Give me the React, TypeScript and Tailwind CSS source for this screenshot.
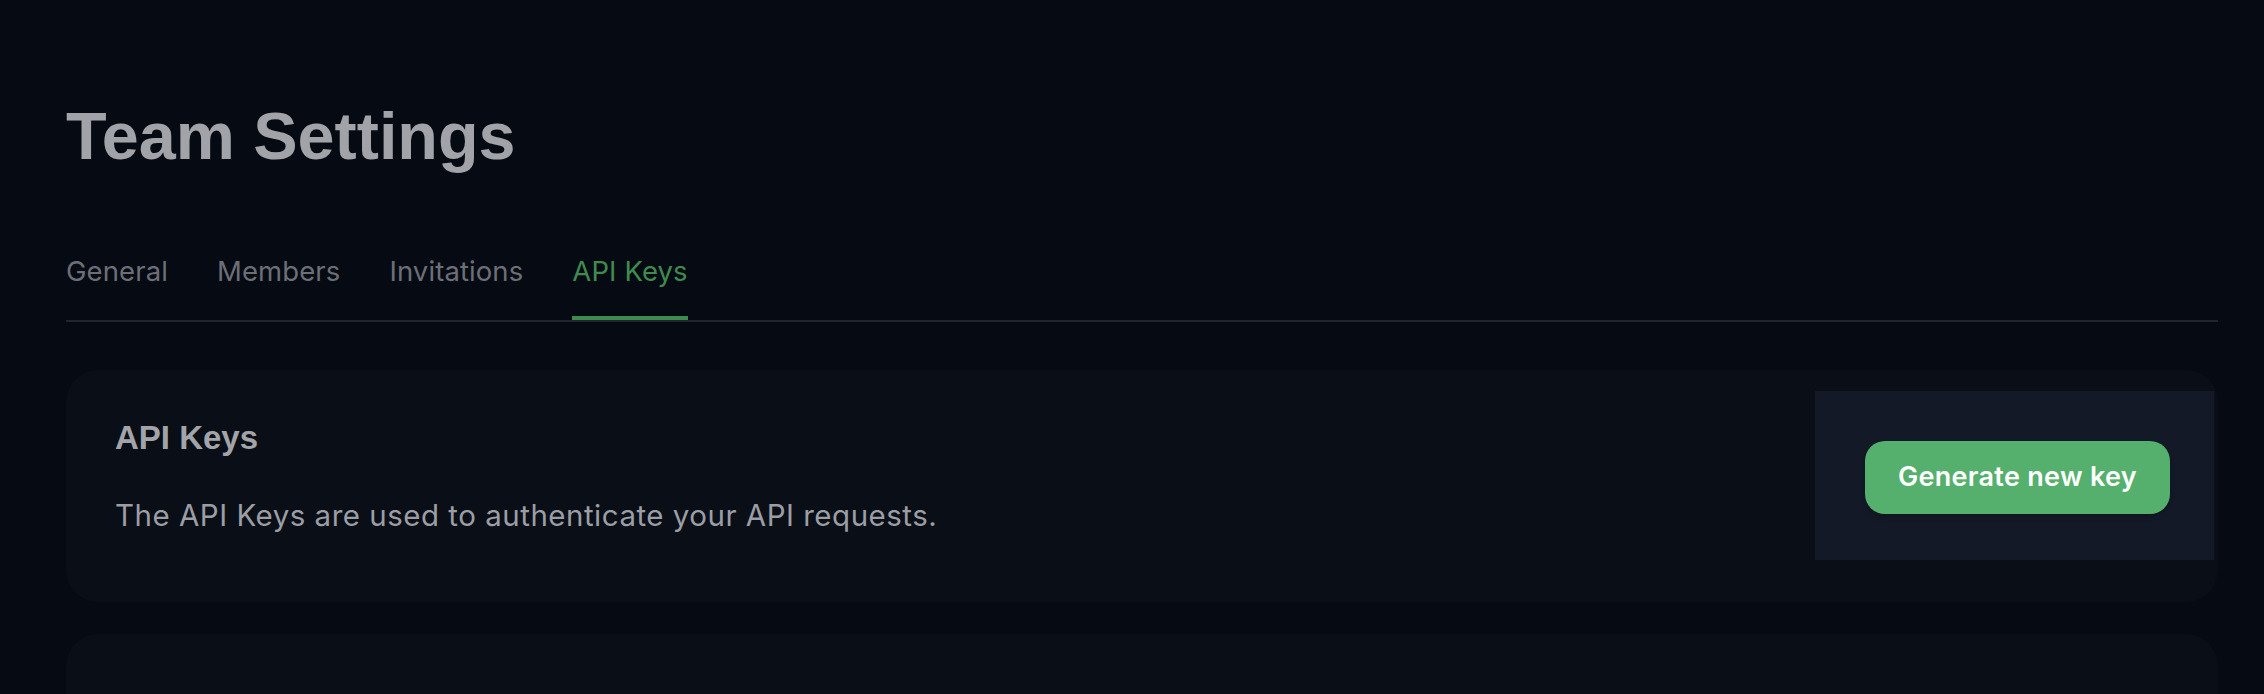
const tabs = ["General", "Members", "Invitations", "API Keys"]

export default function App() {
  const active = "API Keys"

  return (
    <div className="h-[694px] overflow-hidden bg-[#060a12] pl-[66px] pr-[46px] font-['Inter',sans-serif]">
      <h1 className="pt-[103px] text-[66.5px] leading-[66px] font-bold text-[#a1a3a9] font-['Liberation_Sans',Arial,sans-serif]">
        Team Settings
      </h1>

      <nav className="mt-[86px] flex gap-[49px] border-b-2 border-[#22252f]">
        {tabs.map(t => (
          <button
            key={t}
            className={`pb-[28px] text-[27.5px] leading-[33px] tracking-[0.1px] border-b-4 ${
              t === active ? "border-[#3f8a4f] text-[#3f8b4f]" : "border-transparent text-[#6c6f78]"
            }`}
          >
            {t}
          </button>
        ))}
      </nav>

      <section className="mt-[48px] h-[232px] rounded-[32px] bg-[#0a0e16] flex items-start">
        <div className="flex-1 pl-[49px] pt-[48px]">
          <h2 className="text-[33px] leading-[40px] font-bold text-[#a2a4aa] font-['Liberation_Sans',Arial,sans-serif]">
            API Keys
          </h2>
          <p className="mt-[39px] text-[29.5px] leading-[36px] tracking-[0.5px] text-[#9b9ea5]">
            The API Keys are used to authenticate your API requests.
          </p>
        </div>
        <div className="mt-[21px] mr-[4px] w-[399px] h-[169px] bg-[#131926] pt-[50px] pl-[50px]">
          <button className="h-[73px] w-[305px] rounded-[20px] bg-[#55b06e] text-[27px] tracking-[0.3px] font-semibold text-white shadow-md">
            Generate new key
          </button>
        </div>
      </section>

      <section className="mt-[32px] h-[200px] rounded-[32px] bg-[#0a0e16]" />
    </div>
  )
}
